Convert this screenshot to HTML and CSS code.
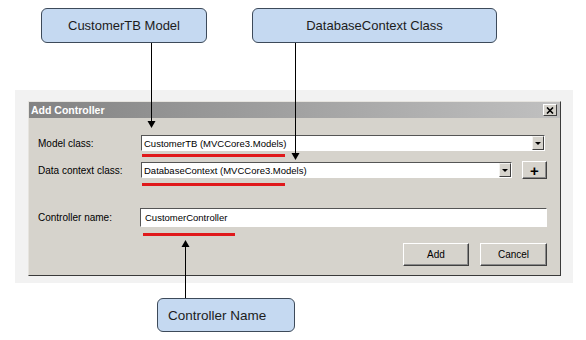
FILE: index.html
```html
<!doctype html>
<html lang="en">
<head>
    <meta charset="UTF-8">
    <title>Add Controller</title>
    <link rel="stylesheet" href="styles.css">
</head>
<body>
<div class="canvas">
    <div class="notes">
        <div class="note note-model">CustomerTB Model</div>
        <div class="note note-context">DatabaseContext Class</div>
    </div>

    <div class="shot">
        <div class="dialog">
            <div class="titlebar">
                <span>Add Controller</span>
                <a href="javascript:;" class="close">
                    <svg width="8" height="7" viewBox="0 0 8 7"><path d="M1 0.5L7 6.5M7 0.5L1 6.5" stroke="#000" stroke-width="1.6"/></svg>
                </a>
            </div>
            <div class="body">
                <div class="row row-model">
                    <label class="label">Model class:</label>
                    <div class="combo combo-model">
                        <span>CustomerTB (MVCCore3.Models)</span>
                        <a href="javascript:;" class="drop"></a>
                    </div>
                </div>
                <div class="row row-context">
                    <label class="label">Data context class:</label>
                    <div class="combo">
                        <span>DatabaseContext (MVCCore3.Models)</span>
                        <a href="javascript:;" class="drop"></a>
                    </div>
                    <a href="javascript:;" class="btn plus">+</a>
                </div>
                <div class="row row-name">
                    <label class="label">Controller name:</label>
                    <div class="textbox">CustomerController</div>
                </div>
                <div class="row row-actions">
                    <a href="javascript:;" class="btn btn-add">Add</a>
                    <a href="javascript:;" class="btn btn-cancel">Cancel</a>
                </div>
            </div>
        </div>
    </div>

    <div class="note note-name">Controller Name</div>

    <!-- arrows and red underlines drawn over the screenshot -->
    <svg class="marks" width="586" height="340" viewBox="0 0 586 340">
        <g stroke="#000" stroke-width="1">
            <line x1="151.5" y1="43" x2="151.5" y2="122"/>
            <line x1="295.5" y1="43" x2="295.5" y2="154"/>
            <line x1="185.5" y1="298" x2="185.5" y2="246"/>
        </g>
        <g fill="#000">
            <polygon points="147.5,121 155.5,121 151.5,128"/>
            <polygon points="291.5,153 299.5,153 295.5,160"/>
            <polygon points="181.5,247 189.5,247 185.5,240"/>
        </g>
        <g fill="#e0191b">
            <rect x="142" y="154" width="143" height="3"/>
            <rect x="142" y="183" width="143" height="3"/>
            <rect x="143" y="233" width="92" height="3"/>
        </g>
    </svg>
</div>
</body>
</html>
```

FILE: styles.css
```css
* {
    margin: 0;
    padding: 0;
}

body {
    font-family: "Liberation Sans", Arial, sans-serif;
    background: #fff;
}

a {
    color: #000;
    text-decoration: none;
}

.canvas {
    position: relative;
    width: 586px;
    height: 340px;
    overflow: hidden;
    background: #fff;
}

.notes {
    display: flex;
    gap: 45px;
    padding: 8px 0 0 41px;
}

.note {
    height: 35px;
    box-sizing: border-box;
    border: 1px solid #3d4a5a;
    border-radius: 6px;
    background: #c5d9f1;
    color: #1c1c1c;
    font-size: 13px;
    display: flex;
    align-items: center;
    justify-content: center;
}

.note-model {
    width: 166px;
}

.note-context {
    width: 245px;
}

.note-name {
    width: 138px;
    height: 34px;
    margin: 15px 0 0 157px;
    justify-content: flex-start;
    padding-left: 10px;
    font-size: 13.5px;
}

.shot {
    width: 558px;
    height: 193px;
    box-sizing: border-box;
    margin: 47px 0 0 15px;
    padding: 11px 0 0 13px;
    background: #f2f2f2;
}

.dialog {
    width: 533px;
    height: 175px;
    box-sizing: border-box;
    background: #d6d3cc;
    border: 1px solid;
    border-color: #e6e4df #3a3a3a #3a3a3a #e6e4df;
    display: flex;
    flex-direction: column;
}

.titlebar {
    height: 16px;
    padding: 0 3px 0 2px;
    background: linear-gradient(to right, #838383, #c0c0c0);
    color: #fff;
    font-size: 10.5px;
    font-weight: bold;
    display: flex;
    align-items: center;
    justify-content: space-between;
}

.close {
    width: 14px;
    height: 12px;
    box-sizing: border-box;
    background: #d6d3cc;
    border: 1px solid;
    border-color: #fff #404040 #404040 #fff;
    display: flex;
    align-items: center;
    justify-content: center;
}

.body {
    display: flex;
    flex-direction: column;
    padding: 0 13px 0 9px;
    font-size: 10px;
}

.row {
    display: flex;
    align-items: center;
}

.row-model {
    margin-top: 17px;
    height: 16px;
}

.row-context {
    margin-top: 10px;
    height: 18px;
}

.row-name {
    margin-top: 29px;
    height: 19px;
}

.row-actions {
    margin-top: 16px;
    justify-content: flex-end;
    gap: 11px;
}

.label {
    width: 103px;
    flex: none;
}

.combo {
    flex: 1;
    height: 16px;
    box-sizing: border-box;
    background: #fff;
    border: 1px solid;
    border-color: #555 #fff #fff #555;
    padding-left: 2px;
    font-size: 9.5px;
    display: flex;
    align-items: center;
    justify-content: space-between;
}

.combo-model {
    margin-right: 2px;
}

.drop {
    width: 12px;
    height: 14px;
    box-sizing: border-box;
    background: #d6d3cc;
    border: 1px solid;
    border-color: #f4f3f0 #404040 #404040 #f4f3f0;
    position: relative;
}

.drop:after {
    content: "";
    position: absolute;
    left: 2px;
    top: 5px;
    border-left: 3px solid transparent;
    border-right: 3px solid transparent;
    border-top: 3px solid #000;
}

.textbox {
    flex: 1;
    height: 19px;
    margin-left: -1px;
    box-sizing: border-box;
    background: #fff;
    border: 1px solid;
    border-color: #555 #fff #fff #555;
    padding-left: 4px;
    font-size: 9.5px;
    display: flex;
    align-items: center;
}

.btn {
    box-sizing: border-box;
    background: #d6d3cc;
    border: 1px solid;
    border-color: #fff #404040 #404040 #fff;
    box-shadow: inset -1px -1px 0 #8a8a8a;
    display: flex;
    align-items: center;
    justify-content: center;
}

.plus {
    width: 25px;
    height: 18px;
    margin-left: 10px;
    font-size: 15px;
    font-weight: bold;
}

.btn-add {
    width: 66px;
    height: 23px;
}

.btn-cancel {
    width: 67px;
    height: 23px;
}

.marks {
    position: absolute;
    left: 0;
    top: 0;
    pointer-events: none;
}
```
